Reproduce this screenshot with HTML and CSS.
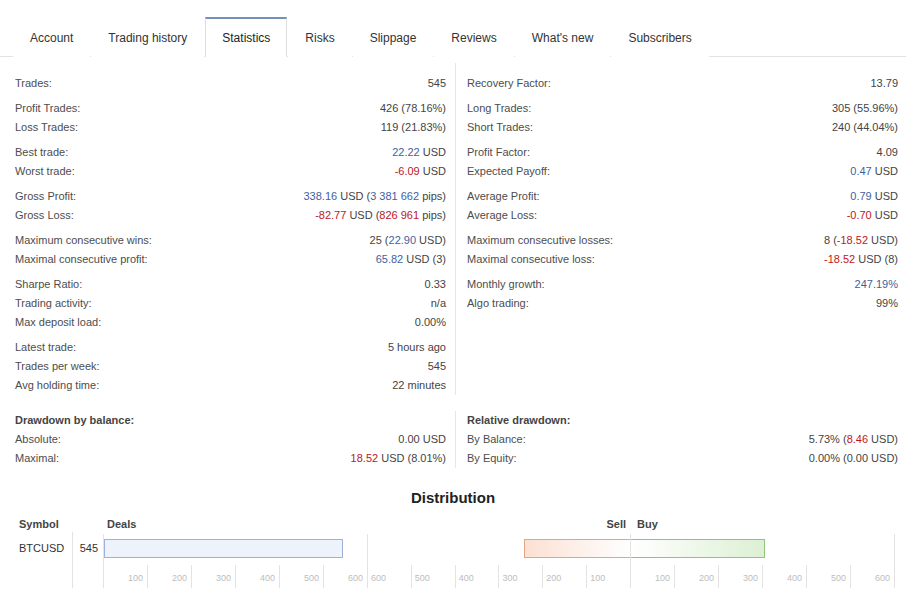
FILE: index.html
```html
<!DOCTYPE html>
<html lang="en">
<head>
<meta charset="utf-8">
<title>Statistics</title>
<link rel="stylesheet" href="styles.css">
</head>
<body>
<div class="page">
  <nav class="tabs">
    <a class="tab">Account</a>
    <a class="tab">Trading history</a>
    <a class="tab active">Statistics</a>
    <a class="tab">Risks</a>
    <a class="tab">Slippage</a>
    <a class="tab">Reviews</a>
    <a class="tab">What's new</a>
    <a class="tab">Subscribers</a>
  </nav>

  <section class="stats">
    <div class="col col-left">
      <div class="group">
        <div class="row"><span class="k">Trades:</span><span class="v">545</span></div>
      </div>
      <div class="group">
        <div class="row"><span class="k">Profit Trades:</span><span class="v">426 (78.16%)</span></div>
        <div class="row"><span class="k">Loss Trades:</span><span class="v">119 (21.83%)</span></div>
      </div>
      <div class="group">
        <div class="row"><span class="k">Best trade:</span><span class="v"><b class="pos">22.22</b> USD</span></div>
        <div class="row"><span class="k">Worst trade:</span><span class="v"><b class="neg">-6.09</b> USD</span></div>
      </div>
      <div class="group">
        <div class="row"><span class="k">Gross Profit:</span><span class="v"><b class="pos">338.16</b> USD (<b class="pos">3 381 662</b> pips)</span></div>
        <div class="row"><span class="k">Gross Loss:</span><span class="v"><b class="neg">-82.77</b> USD (<b class="neg">826 961</b> pips)</span></div>
      </div>
      <div class="group">
        <div class="row"><span class="k">Maximum consecutive wins:</span><span class="v">25 (<b class="pos">22.90</b> USD)</span></div>
        <div class="row"><span class="k">Maximal consecutive profit:</span><span class="v"><b class="pos">65.82</b> USD (3)</span></div>
      </div>
      <div class="group">
        <div class="row"><span class="k">Sharpe Ratio:</span><span class="v">0.33</span></div>
        <div class="row"><span class="k">Trading activity:</span><span class="v">n/a</span></div>
        <div class="row"><span class="k">Max deposit load:</span><span class="v">0.00%</span></div>
      </div>
      <div class="group">
        <div class="row"><span class="k">Latest trade:</span><span class="v">5 hours ago</span></div>
        <div class="row"><span class="k">Trades per week:</span><span class="v">545</span></div>
        <div class="row"><span class="k">Avg holding time:</span><span class="v">22 minutes</span></div>
      </div>
    </div>
    <div class="col col-right">
      <div class="group">
        <div class="row"><span class="k">Recovery Factor:</span><span class="v">13.79</span></div>
      </div>
      <div class="group">
        <div class="row"><span class="k">Long Trades:</span><span class="v">305 (55.96%)</span></div>
        <div class="row"><span class="k">Short Trades:</span><span class="v">240 (44.04%)</span></div>
      </div>
      <div class="group">
        <div class="row"><span class="k">Profit Factor:</span><span class="v">4.09</span></div>
        <div class="row"><span class="k">Expected Payoff:</span><span class="v"><b class="pos">0.47</b> USD</span></div>
      </div>
      <div class="group">
        <div class="row"><span class="k">Average Profit:</span><span class="v"><b class="pos">0.79</b> USD</span></div>
        <div class="row"><span class="k">Average Loss:</span><span class="v"><b class="neg">-0.70</b> USD</span></div>
      </div>
      <div class="group">
        <div class="row"><span class="k">Maximum consecutive losses:</span><span class="v">8 (<b class="neg">-18.52</b> USD)</span></div>
        <div class="row"><span class="k">Maximal consecutive loss:</span><span class="v"><b class="neg">-18.52</b> USD (8)</span></div>
      </div>
      <div class="group">
        <div class="row"><span class="k">Monthly growth:</span><span class="v"><b class="pos">247.19%</b></span></div>
        <div class="row"><span class="k">Algo trading:</span><span class="v">99%</span></div>
      </div>
    </div>
  </section>

  <section class="stats drawdown">
    <div class="col col-left">
      <div class="row"><span class="k head">Drawdown by balance:</span></div>
      <div class="row"><span class="k">Absolute:</span><span class="v">0.00 USD</span></div>
      <div class="row"><span class="k">Maximal:</span><span class="v"><b class="neg">18.52</b> USD (8.01%)</span></div>
    </div>
    <div class="col col-right">
      <div class="row"><span class="k head">Relative drawdown:</span></div>
      <div class="row"><span class="k">By Balance:</span><span class="v">5.73% (<b class="neg">8.46</b> USD)</span></div>
      <div class="row"><span class="k">By Equity:</span><span class="v">0.00% (0.00 USD)</span></div>
    </div>
  </section>

  <h2 class="dist-title">Distribution</h2>

  <div class="dist">
    <div class="dist-head">
      <div class="h-sym">Symbol</div>
      <div class="h-cnt"></div>
      <div class="h-deals">Deals</div>
      <div class="h-sb"><span class="h-sell">Sell</span><span class="h-buy">Buy</span></div>
    </div>
    <div class="dist-body">
      <div class="c-sym">BTCUSD</div>
      <div class="c-cnt">545</div>
      <div class="c-deals">
        <div class="bar-area"><div class="bar deals-bar" style="width:239px"></div></div>
        <div class="axis axis-right">
          <span>100</span><span>200</span><span>300</span><span>400</span><span>500</span><span>600</span>
        </div>
      </div>
      <div class="c-sb">
        <div class="half sell">
          <div class="bar-area"><div class="bar sell-bar" style="width:106px"></div></div>
          <div class="axis axis-left">
            <span>600</span><span>500</span><span>400</span><span>300</span><span>200</span><span>100</span>
          </div>
        </div>
        <div class="half buy">
          <div class="bar-area"><div class="bar buy-bar" style="width:134px"></div></div>
          <div class="axis axis-right">
            <span>100</span><span>200</span><span>300</span><span>400</span><span>500</span><span>600</span>
          </div>
        </div>
      </div>
    </div>
  </div>
</div>
</body>
</html>
```

FILE: styles.css
```css
* { box-sizing: border-box; }

html, body {
  margin: 0;
  padding: 0;
  background: #fff;
}

body {
  font-family: "Liberation Sans", Arial, sans-serif;
  font-size: 11px;
  color: #4a4a4a;
}

.page {
  width: 906px;
}

/* Tabs */
.tabs {
  display: flex;
  align-items: flex-end;
  height: 57px;
  padding-left: 13px;
  border-bottom: 1px solid #e3e3e3;
}

.tab {
  height: 40px;
  margin-bottom: -1px;
  padding: 0 16px;
  display: flex;
  align-items: center;
  font-size: 12px;
  color: #333;
  border: 1px solid transparent;
  border-top: 2px solid transparent;
  background: #fff;
}

.tab + .tab {
  margin-left: 1px;
}

.tab.active {
  border-color: #dedede;
  border-top-color: #7490bb;
  border-bottom-color: #fff;
  color: #222;
}

/* Stats */
.stats {
  display: grid;
  grid-template-columns: 440px 1fr;
  padding: 0 8px 0 15px;
  margin-top: 6px;
}

.col-left {
  padding: 11px 9px 0 0;
}

.col-right {
  padding: 11px 0 0 11px;
  border-left: 1px solid #e6e6e6;
}

.group + .group {
  margin-top: 6px;
}

.row {
  display: flex;
  justify-content: space-between;
  height: 19px;
  line-height: 19px;
  white-space: nowrap;
}

.k { color: #4d4d4d; }
.v { color: #444; text-align: right; }
.k.head { font-weight: bold; color: #444; }

b { font-weight: normal; }
.pos { color: #3f5f9f; }
.neg { color: #c0151c; }

.drawdown {
  margin-top: 16px;
}

.drawdown .col-left,
.drawdown .col-right {
  padding-top: 0;
}

/* Distribution */
.dist-title {
  margin: 20px 0 0;
  text-align: center;
  font-size: 15px;
  line-height: 20px;
  font-weight: bold;
  color: #222;
}

.dist {
  margin-top: 8px;
  padding-left: 15px;
}

.dist-head,
.dist-body {
  display: grid;
  grid-template-columns: 57px 31px 264px 528px;
}

.dist-head {
  height: 16px;
  line-height: 16px;
  font-weight: bold;
  color: #444;
}

.h-sym { padding-left: 4px; }
.h-deals { padding-left: 4px; }

.h-sb {
  display: grid;
  grid-template-columns: 1fr 1fr;
}

.h-sell { text-align: right; padding-right: 5px; }
.h-buy { padding-left: 6px; }

.dist-body {
  height: 56px;
}

.c-sym {
  padding: 8px 0 0 4px;
  line-height: 16px;
  color: #333;
}

.c-cnt {
  border-left: 1px solid #e3e3e3;
  padding: 8px 5px 0 0;
  line-height: 16px;
  text-align: right;
  color: #333;
}

.c-deals {
  border-left: 1px solid #e3e3e3;
  margin-top: 2px;
}

.c-sb {
  display: grid;
  grid-template-columns: 263px 1fr;
  border-left: 1px solid #e3e3e3;
  border-right: 1px solid #e3e3e3;
  margin-top: 2px;
}

.half.sell {
  border-right: 1px solid #e3e3e3;
}

.bar-area {
  height: 29px;
  padding-top: 5px;
  display: flex;
}

.sell .bar-area {
  justify-content: flex-end;
}

.bar {
  height: 19px;
}

.deals-bar {
  background: #eef3fb;
  border: 1px solid #9cb3d7;
}

.sell-bar {
  background: linear-gradient(to right, #fbe0d3, #fff);
  border: 1px solid #e3a487;
  border-right: none;
}

.buy-bar {
  background: linear-gradient(to right, #fff, #dcf0d3);
  border: 1px solid #8fc47d;
  border-left: none;
}

.axis {
  display: flex;
  height: 23px;
  margin-top: 2px;
  font-size: 9px;
  color: #bdbdbd;
}

.axis span {
  flex: 1;
  padding-top: 7px;
  line-height: 12px;
}

.axis-right span {
  text-align: right;
  padding-right: 4px;
  border-right: 1px solid #e3e3e3;
}

.axis-right span:last-child {
  border-right: none;
}

.axis-left span {
  text-align: left;
  padding-left: 3px;
  border-left: 1px solid #e3e3e3;
}

.axis-left span:first-child {
  border-left: none;
}
```
